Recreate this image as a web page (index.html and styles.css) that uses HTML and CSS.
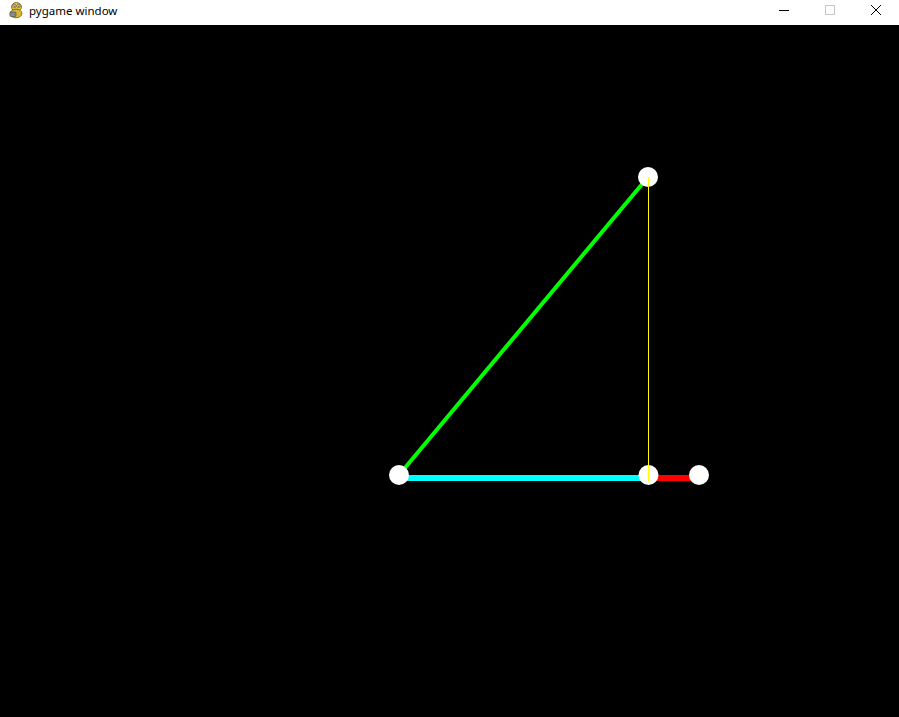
FILE: index.html
```html
<!DOCTYPE html>
<html>
<head>
<meta charset="utf-8">
<link rel="stylesheet" href="styles.css">
</head>
<body>
<div class="window">
  <div class="titlebar">
    <div class="title">
      <svg class="app-icon" width="16" height="17" viewBox="0 0 16 17">
        <ellipse cx="8.5" cy="5" rx="5" ry="4.5" fill="#e8c43a" stroke="#6b5a1a" stroke-width="0.8"/>
        <ellipse cx="8" cy="11.5" rx="6" ry="4.3" fill="#d9b733" stroke="#6b5a1a" stroke-width="0.8"/>
        <circle cx="6.5" cy="4" r="1.6" fill="#fff" stroke="#333" stroke-width="0.6"/>
        <circle cx="10.5" cy="4" r="1.6" fill="#fff" stroke="#333" stroke-width="0.6"/>
        <circle cx="6.7" cy="4.2" r="0.6" fill="#222"/>
        <circle cx="10.7" cy="4.2" r="0.6" fill="#222"/>
        <rect x="2" y="10" width="6" height="4.5" rx="1" fill="#8a8a8a" stroke="#444" stroke-width="0.6"/>
      </svg>
      <span class="title-text">pygame window</span>
    </div>
    <div class="controls">
      <div class="ctl">
        <svg width="10" height="10" viewBox="0 0 10 10"><line x1="0" y1="5.5" x2="10" y2="5.5" stroke="#000" stroke-width="1"/></svg>
      </div>
      <div class="ctl">
        <svg width="10" height="10" viewBox="0 0 10 10"><rect x="0.5" y="0.5" width="9" height="9" fill="none" stroke="#c8c8c8" stroke-width="1"/></svg>
      </div>
      <div class="ctl">
        <svg width="10" height="10" viewBox="0 0 10 10"><path d="M0 0 L10 10 M10 0 L0 10" stroke="#000" stroke-width="1"/></svg>
      </div>
    </div>
  </div>
  <div class="canvas">
    <svg class="scene" width="899" height="692" viewBox="0 25 899 692">
      <line x1="399" y1="475" x2="648" y2="177" stroke="#00ff00" stroke-width="4"/>
      <rect x="399" y="475" width="250" height="6" fill="#00ffff"/>
      <rect x="649" y="475" width="50" height="6" fill="#ff0000"/>
      <circle cx="399" cy="475" r="10" fill="#ffffff"/>
      <circle cx="648.5" cy="475" r="10" fill="#ffffff"/>
      <circle cx="699" cy="475" r="10" fill="#ffffff"/>
      <circle cx="648" cy="177" r="10" fill="#ffffff"/>
      <rect x="648" y="177" width="1" height="304" fill="#ffff00"/>
    </svg>
  </div>
</div>
</body>
</html>
```
FILE: styles.css
```css
html, body {
  margin: 0;
  padding: 0;
  width: 899px;
  height: 717px;
  overflow: hidden;
  background: #000;
}
.window {
  display: flex;
  flex-direction: column;
  width: 899px;
  height: 717px;
}
.titlebar {
  height: 25px;
  flex: 0 0 25px;
  background: #fff;
  display: flex;
  align-items: center;
  justify-content: space-between;
}
.title {
  display: flex;
  align-items: center;
  padding-left: 8px;
  gap: 5px;
}
.app-icon {
  display: block;
  margin-top: -5px;
}
.title-text {
  font-family: "Noto Sans", "DejaVu Sans", sans-serif;
  font-size: 11.5px;
  color: #000;
  line-height: 16px;
  position: relative;
  top: -2px;
}
.controls {
  display: flex;
  height: 25px;
}
.ctl {
  width: 46px;
  height: 25px;
  display: flex;
  align-items: center;
  justify-content: center;
}
.ctl svg {
  display: block;
  margin-top: -6px;
}
.canvas {
  flex: 1;
  background: #000;
}
.scene {
  display: block;
}
```
